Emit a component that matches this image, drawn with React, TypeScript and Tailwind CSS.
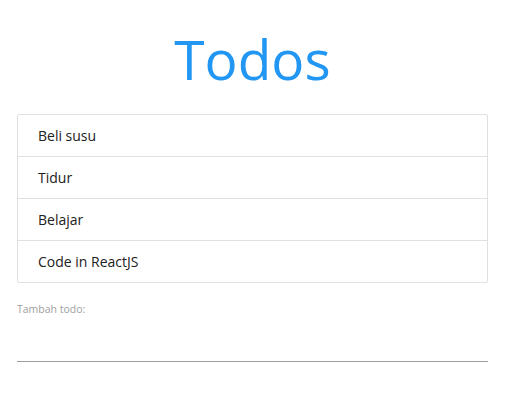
const todos = ["Beli susu", "Tidur", "Belajar", "Code in ReactJS"]

export default function App() {
  return (
    <div className="min-h-screen bg-white font-['Open_Sans',sans-serif] text-[#212121]">
      <div className="mx-[17px] pt-[27px]">
        <h1 className="text-center text-[55px] leading-[64px] font-normal text-[#2196f3]">Todos</h1>
        <ul className="mt-[23px] border border-[#e0e0e0] rounded-[2px]">
          {todos.map((t) => (
            <li
              key={t}
              className="px-[20px] h-[42px] flex items-center text-[14px] border-b border-[#e0e0e0] last:border-b-0 last:h-[41px]"
            >
              {t}
            </li>
          ))}
        </ul>
        <div className="mt-[19px]">
          <label className="block text-[10.5px] text-[#9e9e9e]">Tambah todo:</label>
          <input
            type="text"
            className="w-full h-[43px] mt-[1px] border-b border-[#9e9e9e] outline-none bg-transparent text-[16px]"
          />
        </div>
      </div>
    </div>
  )
}
